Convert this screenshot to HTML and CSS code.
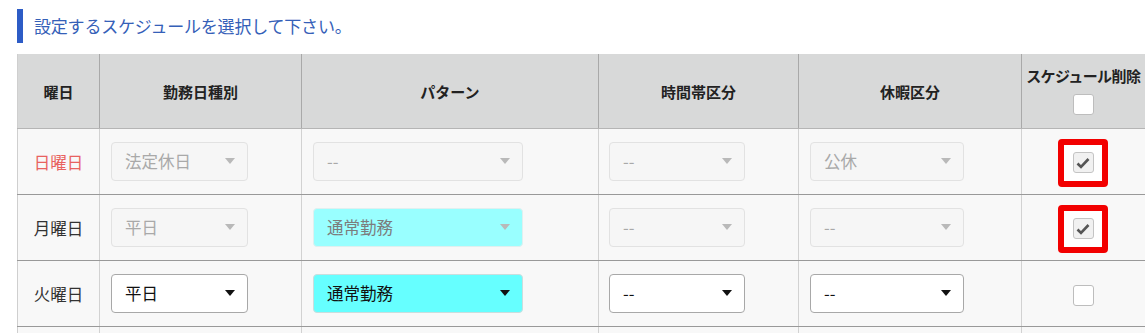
FILE: index.html
```html
<!DOCTYPE html>
<html lang="ja">
<head>
<meta charset="utf-8">
<title>スケジュール設定</title>
<link rel="stylesheet" href="styles.css">
</head>
<body>
<div class="page">
  <h2 class="title">設定するスケジュールを選択して下さい。</h2>
  <table class="sched">
    <colgroup>
      <col class="c-day"><col class="c-kind"><col class="c-pat"><col class="c-time"><col class="c-leave"><col class="c-del">
    </colgroup>
    <thead>
      <tr>
        <th>曜日</th>
        <th>勤務日種別</th>
        <th>パターン</th>
        <th>時間帯区分</th>
        <th>休暇区分</th>
        <th class="th-del"><div class="del-label">スケジュール削除</div><span class="cb cb-head"></span></th>
      </tr>
    </thead>
    <tbody>
      <tr>
        <td class="day sun">日曜日</td>
        <td><div class="sel w-kind dis"><span>法定休日</span><svg class="arr" viewBox="0 0 10 6"><path d="M0 0H10L5 6Z"/></svg></div></td>
        <td><div class="sel w-pat dis"><span>--</span><svg class="arr" viewBox="0 0 10 6"><path d="M0 0H10L5 6Z"/></svg></div></td>
        <td><div class="sel w-time dis"><span>--</span><svg class="arr" viewBox="0 0 10 6"><path d="M0 0H10L5 6Z"/></svg></div></td>
        <td><div class="sel w-leave dis"><span>公休</span><svg class="arr" viewBox="0 0 10 6"><path d="M0 0H10L5 6Z"/></svg></div></td>
        <td class="del"><span class="mark"><span class="cb cb-dis"><svg viewBox="0 0 14 12"><path d="M1.5 6.5L5 10L12.5 2" fill="none" stroke="#555" stroke-width="2.6"/></svg></span></span></td>
      </tr>
      <tr>
        <td class="day">月曜日</td>
        <td><div class="sel w-kind dis"><span>平日</span><svg class="arr" viewBox="0 0 10 6"><path d="M0 0H10L5 6Z"/></svg></div></td>
        <td><div class="sel w-pat dis cyan-dis"><span>通常勤務</span><svg class="arr" viewBox="0 0 10 6"><path d="M0 0H10L5 6Z"/></svg></div></td>
        <td><div class="sel w-time dis"><span>--</span><svg class="arr" viewBox="0 0 10 6"><path d="M0 0H10L5 6Z"/></svg></div></td>
        <td><div class="sel w-leave dis"><span>--</span><svg class="arr" viewBox="0 0 10 6"><path d="M0 0H10L5 6Z"/></svg></div></td>
        <td class="del"><span class="mark"><span class="cb cb-dis"><svg viewBox="0 0 14 12"><path d="M1.5 6.5L5 10L12.5 2" fill="none" stroke="#555" stroke-width="2.6"/></svg></span></span></td>
      </tr>
      <tr>
        <td class="day">火曜日</td>
        <td><div class="sel w-kind"><span>平日</span><svg class="arr" viewBox="0 0 10 6"><path d="M0 0H10L5 6Z"/></svg></div></td>
        <td><div class="sel w-pat cyan"><span>通常勤務</span><svg class="arr" viewBox="0 0 10 6"><path d="M0 0H10L5 6Z"/></svg></div></td>
        <td><div class="sel w-time"><span>--</span><svg class="arr" viewBox="0 0 10 6"><path d="M0 0H10L5 6Z"/></svg></div></td>
        <td><div class="sel w-leave"><span>--</span><svg class="arr" viewBox="0 0 10 6"><path d="M0 0H10L5 6Z"/></svg></div></td>
        <td class="del"><span class="cb"></span></td>
      </tr>
      <tr class="tail">
        <td></td><td></td><td></td><td></td><td></td><td></td>
      </tr>
    </tbody>
  </table>
</div>
</body>
</html>
```
FILE: styles.css
```css
html, body {
  margin: 0;
  padding: 0;
  background: #ffffff;
}
body {
  font-family: "Noto Sans CJK JP", "Noto Sans", sans-serif;
  color: #333;
}
.page {
  padding: 9px 0 0 17px;
}
.title {
  margin: 0 0 11px 0;
  height: 34px;
  line-height: 34px;
  border-left: 6px solid #2d5cc6;
  padding-left: 11px;
  font-size: 17px;
  font-weight: normal;
  color: #3560b8;
  letter-spacing: -0.2px;
}
.sched {
  border-collapse: collapse;
  table-layout: fixed;
  width: 1127px;
  border-left: 1px solid #cfcfcf;
}
.c-day { width: 82px; }
.c-kind { width: 202px; }
.c-pat { width: 297px; }
.c-time { width: 200px; }
.c-leave { width: 223px; }
.c-del { width: 123px; }

.sched th {
  background: #d8d9d9;
  height: 74px;
  padding: 0;
  font-size: 15px;
  font-weight: bold;
  color: #222;
  text-align: center;
  vertical-align: middle;
  border-left: 1px solid #a9a9a9;
  border-bottom: 1px solid #b5b5b5;
}
.sched th:first-child { border-left: none; }
.th-del {
  white-space: nowrap;
}
.del-label {
  line-height: 20px;
  letter-spacing: -0.6px;
  margin-top: -1px;
}
.cb-head {
  margin-top: 8px;
  border-color: #ffffff;
}

.sched td {
  background: #f8f8f8;
  height: 65px;
  padding: 0 0 0 11px;
  vertical-align: middle;
  border-left: 1px solid #d2d2d2;
  border-bottom: 1px solid #999;
  font-size: 16.5px;
}
.sched td:first-child { border-left: none; }
.sched td.day {
  padding: 0;
  text-align: center;
  color: #333;
}
.sched td.sun { color: #e8625f; }
.sched td.del {
  padding: 0;
  text-align: center;
}
.sched .tail td {
  height: 40px;
  border-bottom: none;
}

.sel {
  box-sizing: border-box;
  height: 39px;
  display: flex;
  align-items: center;
  justify-content: space-between;
  padding: 0 12px 1px 13px;
  border: 1px solid #a8a8a8;
  border-radius: 4px;
  background: #ffffff;
  color: #111;
  font-size: 16.5px;
}
.sel .arr {
  width: 10px;
  height: 6px;
  fill: #111;
  flex: none;
}
.sel.dis {
  border-color: #e2e2e2;
  background: #f6f6f6;
  color: #a9a9a9;
}
.sel.dis .arr { fill: #b9b9b9; }
.sel.cyan {
  background: #66ffff;
  border-color: #c9dede;
}
.sel.cyan-dis {
  background: #99ffff;
  border-color: #dff0f0;
  color: #7c7c7c;
}
.w-kind { width: 137px; }
.w-pat { width: 210px; }
.w-time { width: 136px; margin-left: -1px; }
.w-leave { width: 154px; }

.cb {
  box-sizing: border-box;
  display: inline-flex;
  align-items: center;
  justify-content: center;
  width: 21px;
  height: 21px;
  border: 1px solid #bdbdbd;
  border-radius: 3px;
  background: #ffffff;
  vertical-align: middle;
}
.cb svg {
  width: 14px;
  height: 12px;
}
.cb-dis {
  background: #f1f1f1;
  border-color: #c4c4c4;
}
.mark {
  display: inline-flex;
  align-items: center;
  justify-content: center;
  box-sizing: border-box;
  width: 50px;
  height: 48px;
  border: 6px solid #f20000;
  border-radius: 4px;
  background: #ffffff;
  vertical-align: middle;
  margin-top: 2px;
}
```
